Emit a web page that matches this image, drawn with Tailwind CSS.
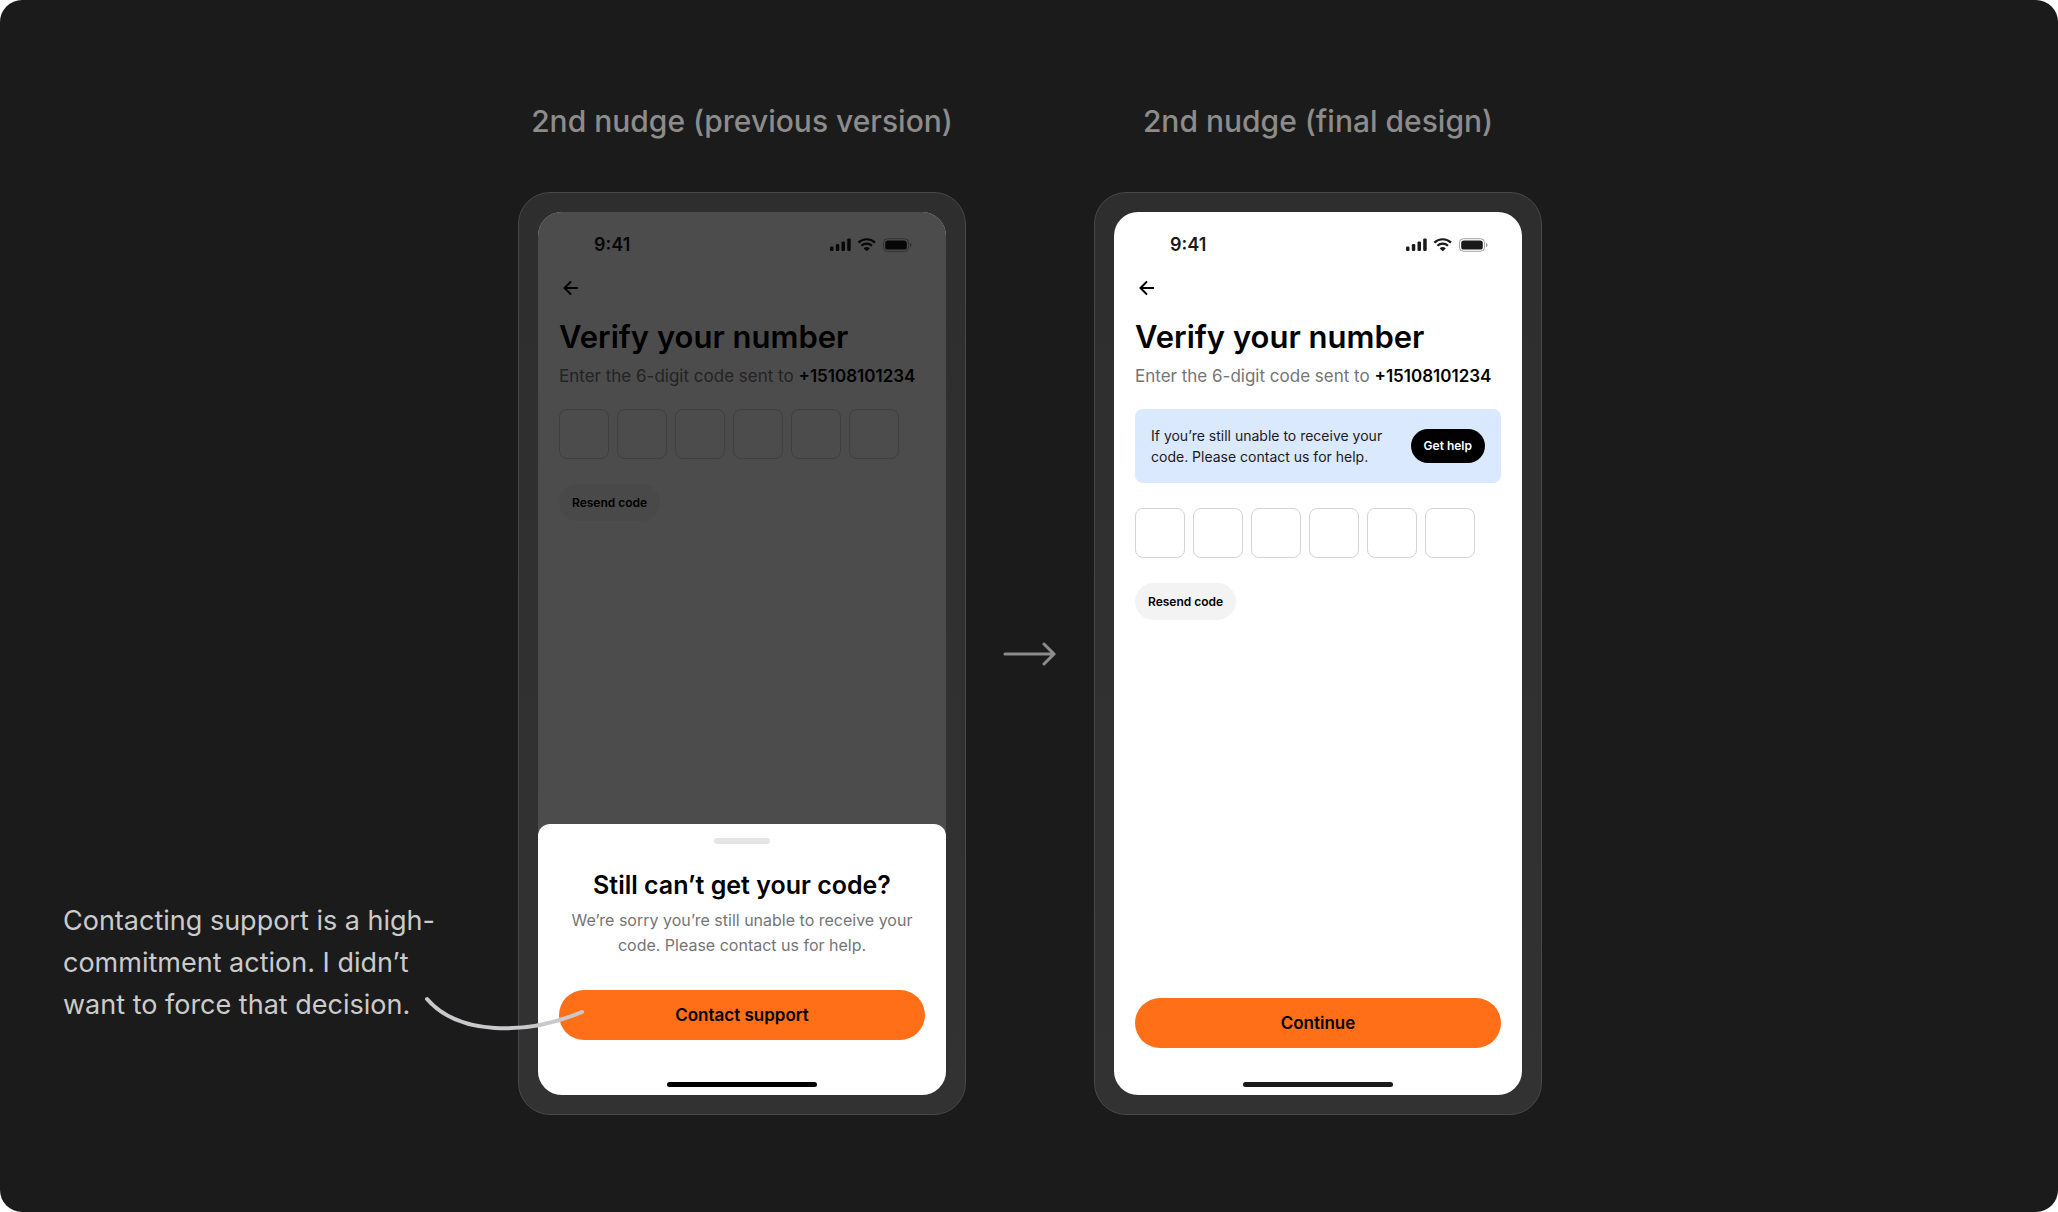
<!DOCTYPE html>
<html lang="en">
<head>
    <meta charset="utf-8"/>
    <meta content="width=device-width, initial-scale=1.0" name="viewport"/>
    <title>2nd nudge - before and after</title>
    <script src="https://cdn.jsdelivr.net/npm/@tailwindcss/browser@4"></script>
</head>
<body class="bg-white font-['Inter',sans-serif]">
    <!-- Shared icons -->
    <svg class="hidden" aria-hidden="true">
        <symbol id="status-icons" viewBox="0 0 82 14">
            <g fill="currentColor">
                <rect x="0" y="8.5" width="3.5" height="4.5" rx="1.2"/>
                <rect x="5.8" y="6" width="3.5" height="7" rx="1.2"/>
                <rect x="11.5" y="3.4" width="3.5" height="9.6" rx="1.2"/>
                <rect x="17.2" y="0.4" width="3.5" height="12.6" rx="1.2"/>
                <path d="M36.7 9.1c1 0 2 .4 2.800 1 .2.2.2.4 0 .6l-2.400 2.400c-.2.2-.5.200-.7 0L34 10.700c-.2-.2-.2-.4 0-.6.8-.6 1.700-1 2.700-1z"/>
            </g>
            <g fill="none" stroke="currentColor" stroke-width="2.200">
                <path d="M31.400 7.800a7.700 7.700 0 0 1 10.600 0"/>
                <path d="M28.400 4.600a12 12 0 0 1 16.600 0"/>
            </g>
            <rect x="53.500" y="0.700" width="25" height="12.600" rx="4" fill="none" stroke="currentColor" stroke-opacity=".4"/>
            <path d="M80 5v4.200c.9-.4 1.500-1.200 1.500-2.100S80.900 5.400 80 5z" fill="currentColor" fill-opacity=".45"/>
            <rect x="55.200" y="2.400" width="21.600" height="9.200" rx="2.600" fill="currentColor"/>
        </symbol>
        <symbol id="back-arrow" viewBox="0 0 20 20">
            <path d="M17 10H4M10 3.500 3.500 10l6.500 6.500" fill="none" stroke="currentColor" stroke-width="2"/>
        </symbol>
    </svg>

    <main class="grid min-h-screen grid-cols-[1fr_auto_auto_auto_1fr] rounded-[22px] bg-[#1b1b1b] py-24 pl-0.5">
        <!-- Note -->
        <div class="relative mb-[90px] self-end pl-[61px]">
            <p class="max-w-[390px] text-[27px] leading-[42px] text-[#cbcbcb]">Contacting support is a high-<br/>commitment action. I didn’t<br/>want to force that decision.</p>
            <svg class="absolute -right-[68px] -bottom-2 z-10 h-10 w-[164px] text-[#c9c9cb]" viewBox="0 0 164 40" fill="none" aria-hidden="true">
                <path d="M5 5C36 41 103 42 160 18" stroke="currentColor" stroke-width="4" stroke-linecap="round"/>
            </svg>
        </div>

        <!-- Previous version -->
        <section class="flex flex-col items-center gap-[46px]">
            <h2 class="text-[30px] leading-[50px] font-medium whitespace-nowrap text-[#8c8c8c]">2nd nudge (previous version)</h2>
            <div class="rounded-[32px] border border-[#484848] bg-linear-to-b from-[#2e2e2e] to-[#323232] p-[19px]">
                <div class="relative flex aspect-[408/883] w-[408px] flex-col overflow-hidden rounded-3xl bg-white px-[21px] text-black">
                    <div class="flex h-[66px] items-center justify-between pr-[13px] pl-[35px] text-[#1a1a1a]">
                        <span class="text-lg font-semibold">9:41</span>
                        <svg class="h-3.5 w-[82px]" role="img" aria-label="Signal, wifi and battery"><use href="#status-icons"/></svg>
                    </div>
                    <button class="size-5" aria-label="Back"><svg class="ml-0.5 size-5"><use href="#back-arrow"/></svg></button>
                    <h3 class="mt-[19px] text-[31px] leading-10 font-semibold">Verify your number</h3>
                    <p class="mt-[7px] text-[17px] leading-6 whitespace-nowrap text-[#757575]">Enter the 6-digit code sent to <span class="font-semibold text-black">+15108101234</span></p>
                    <div class="mt-[21px] flex flex-col items-start gap-[25px]">
                        <div class="flex gap-2">
                            <input class="size-[50px] rounded-lg border border-[#d4d4d4] text-center" aria-label="Digit 1" maxlength="1"/>
                            <input class="size-[50px] rounded-lg border border-[#d4d4d4] text-center" aria-label="Digit 2" maxlength="1"/>
                            <input class="size-[50px] rounded-lg border border-[#d4d4d4] text-center" aria-label="Digit 3" maxlength="1"/>
                            <input class="size-[50px] rounded-lg border border-[#d4d4d4] text-center" aria-label="Digit 4" maxlength="1"/>
                            <input class="size-[50px] rounded-lg border border-[#d4d4d4] text-center" aria-label="Digit 5" maxlength="1"/>
                            <input class="size-[50px] rounded-lg border border-[#d4d4d4] text-center" aria-label="Digit 6" maxlength="1"/>
                        </div>
                        <button class="h-[37px] rounded-full bg-[#f3f3f3] px-[13px] text-xs font-semibold">Resend code</button>
                    </div>

                    <!-- Bottom sheet -->
                    <div class="absolute inset-0 flex flex-col justify-end bg-black/70">
                        <div class="flex flex-col items-center rounded-t-xl bg-white px-[21px] pt-3.5 pb-2 text-center">
                            <div class="h-1.5 w-14 rounded-full bg-[#e5e5e5]"></div>
                            <h3 class="mt-[25px] text-[25px] leading-8 font-semibold">Still can’t get your code?</h3>
                            <p class="mt-[7px] text-base leading-[25px] text-[#757575]">We’re sorry you’re still unable to receive your<br/>code. Please contact us for help.</p>
                            <button class="mt-8 h-[50px] w-full rounded-full bg-[#ff6f17] pt-0.5 text-[17px] font-semibold">Contact support</button>
                            <div class="mt-[42px] h-[5px] w-[150px] rounded-full bg-black"></div>
                        </div>
                    </div>
                </div>
            </div>
        </section>

        <div class="flex w-32 items-center justify-center pt-24">
            <svg class="h-6 w-14 text-[#8c8c8c]" viewBox="0 0 56 24" fill="none" aria-hidden="true">
                <path d="M3 12h49M42 2l10 10-10 10" stroke="currentColor" stroke-width="3" stroke-linecap="round"/>
            </svg>
        </div>

        <!-- Final design -->
        <section class="flex flex-col items-center gap-[46px]">
            <h2 class="text-[30px] leading-[50px] font-medium whitespace-nowrap text-[#8c8c8c]">2nd nudge (final design)</h2>
            <div class="rounded-[32px] border border-[#484848] bg-linear-to-b from-[#2e2e2e] to-[#323232] p-[19px]">
                <div class="flex aspect-[408/883] w-[408px] flex-col overflow-hidden rounded-3xl bg-white px-[21px] text-black">
                    <div class="flex h-[66px] items-center justify-between pr-[13px] pl-[35px] text-[#1a1a1a]">
                        <span class="text-lg font-semibold">9:41</span>
                        <svg class="h-3.5 w-[82px]" role="img" aria-label="Signal, wifi and battery"><use href="#status-icons"/></svg>
                    </div>
                    <button class="size-5" aria-label="Back"><svg class="ml-0.5 size-5"><use href="#back-arrow"/></svg></button>
                    <h3 class="mt-[19px] text-[31px] leading-10 font-semibold">Verify your number</h3>
                    <p class="mt-[7px] text-[17px] leading-6 whitespace-nowrap text-[#757575]">Enter the 6-digit code sent to <span class="font-semibold text-black">+15108101234</span></p>
                    <div class="mt-[21px] flex flex-col items-start gap-[25px]">
                        <div class="flex w-full items-center justify-between rounded-lg bg-[#dbe9ff] p-4">
                            <p class="text-sm leading-[21px] whitespace-nowrap text-[#1a1a1a]">If you’re still unable to receive your<br/>code. Please contact us for help.</p>
                            <button class="h-[34px] rounded-full bg-black px-[13px] text-xs font-semibold whitespace-nowrap text-white">Get help</button>
                        </div>
                        <div class="flex gap-2">
                            <input class="size-[50px] rounded-lg border border-[#d4d4d4] text-center" aria-label="Digit 1" maxlength="1"/>
                            <input class="size-[50px] rounded-lg border border-[#d4d4d4] text-center" aria-label="Digit 2" maxlength="1"/>
                            <input class="size-[50px] rounded-lg border border-[#d4d4d4] text-center" aria-label="Digit 3" maxlength="1"/>
                            <input class="size-[50px] rounded-lg border border-[#d4d4d4] text-center" aria-label="Digit 4" maxlength="1"/>
                            <input class="size-[50px] rounded-lg border border-[#d4d4d4] text-center" aria-label="Digit 5" maxlength="1"/>
                            <input class="size-[50px] rounded-lg border border-[#d4d4d4] text-center" aria-label="Digit 6" maxlength="1"/>
                        </div>
                        <button class="h-[37px] rounded-full bg-[#f3f3f3] px-[13px] text-xs font-semibold">Resend code</button>
                    </div>
                    <div class="mt-auto flex flex-col items-center pb-2">
                        <button class="h-[50px] w-full rounded-full bg-[#ff6f17] pt-0.5 text-[17px] font-semibold">Continue</button>
                        <div class="mt-[34px] h-[5px] w-[150px] rounded-full bg-[#1a1a1a]"></div>
                    </div>
                </div>
            </div>
        </section>
    </main>
</body>
</html>
